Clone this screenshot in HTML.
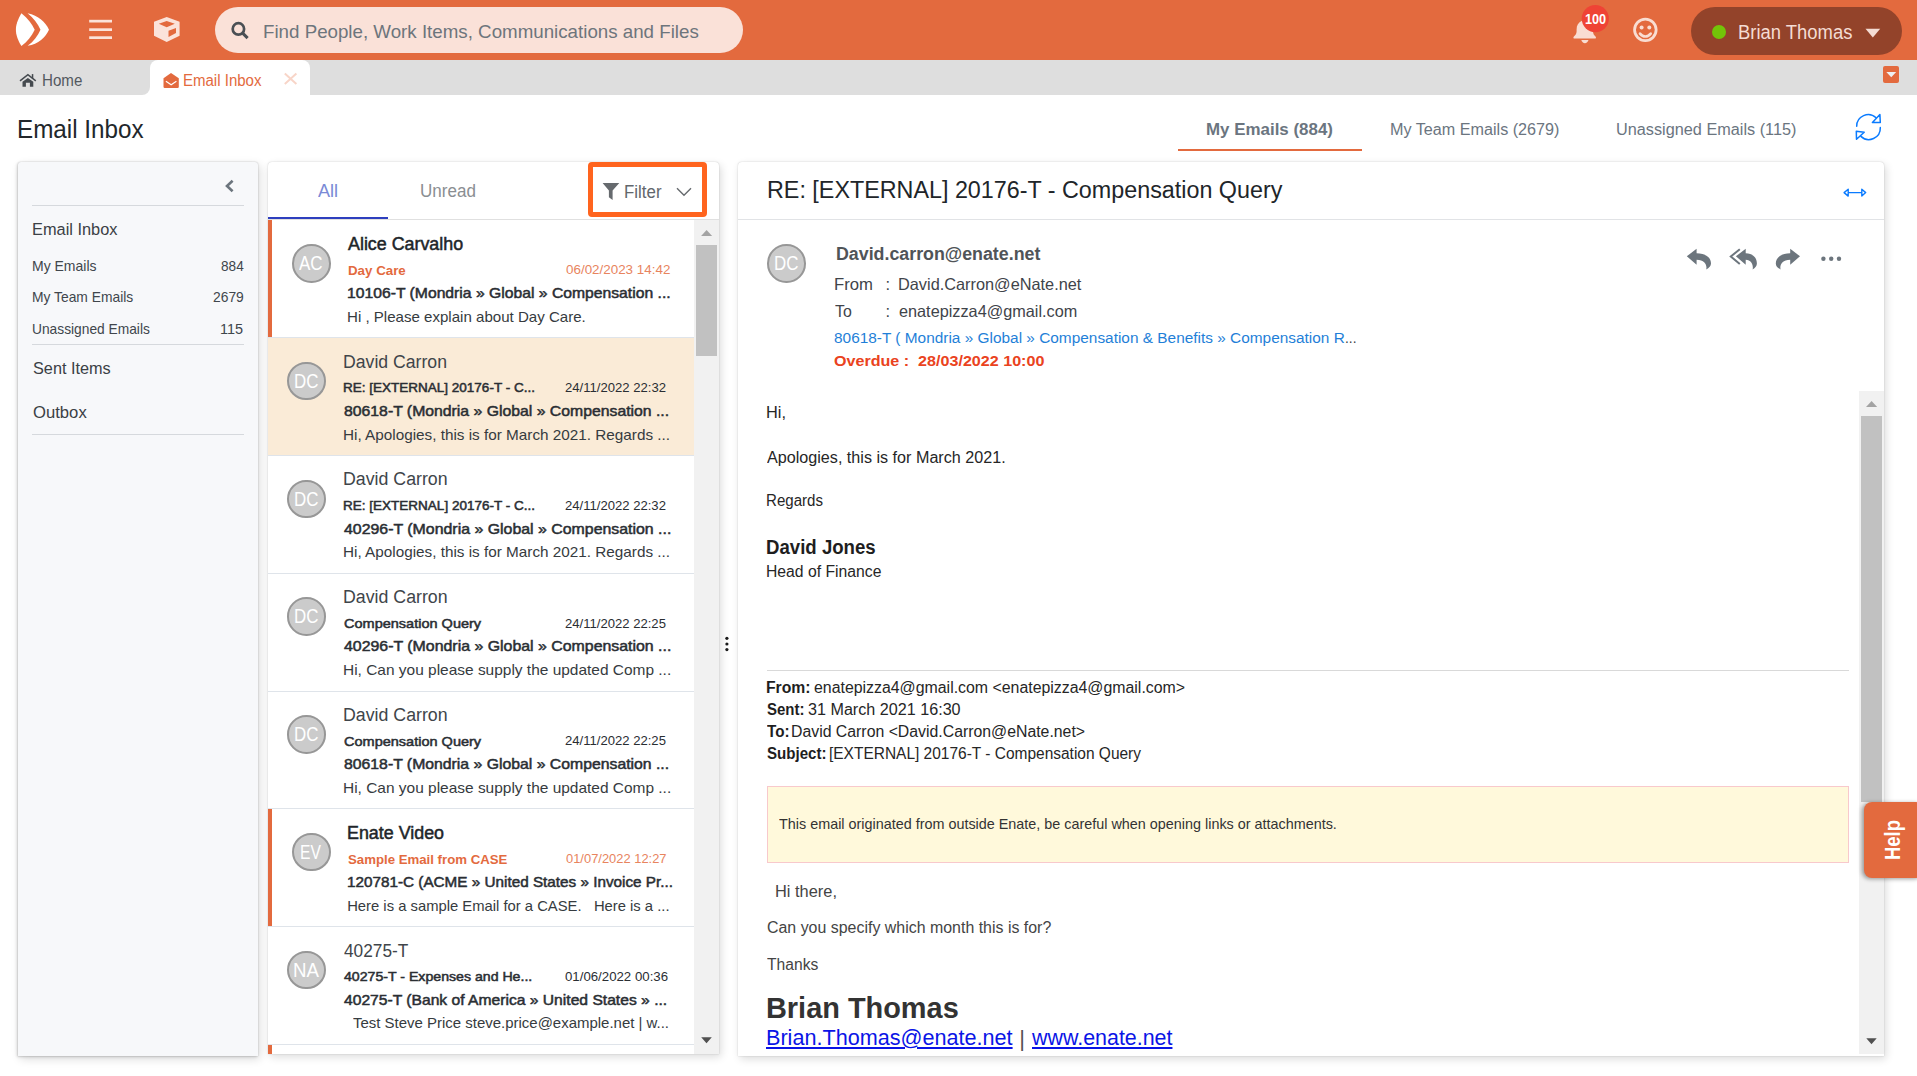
<!DOCTYPE html>
<html><head><meta charset="utf-8"><title>Email Inbox</title>
<style>
html,body{margin:0;padding:0;width:1917px;height:1076px;overflow:hidden;background:#fff;font-family:"Liberation Sans",sans-serif;}
.b{position:absolute;box-sizing:border-box;}
.t{position:absolute;white-space:pre;line-height:normal;transform-origin:0 0;}
</style></head><body>
<div class=b style="left:0;top:0;width:1917px;height:60px;background:#E36A3E"></div>
<svg class=b style="left:0;top:0" width="260" height="60" viewBox="0 0 260 60">
<path fill="#fff" d="M21.4,13.3 C17.5,20 15.9,25 15.9,29.7 C15.9,34.5 17.5,39.5 21.4,46 C27.5,41.5 31.8,36 34.7,29.7 C31.8,23.5 27.5,18 21.4,13.3 Z"/>
<path fill="#fff" d="M27.6,13.3 C38.5,15.5 45.5,22 49,29.7 C45.5,37.5 38.5,44 27.6,45.8 C33.5,41.5 37.8,36 40.5,29.7 C37.8,23.5 33.5,18 27.6,13.3 Z"/>
<rect x="89.2" y="19.8" width="22.8" height="2.7" fill="#FBE3DA"/>
<rect x="89.2" y="28.3" width="22.8" height="2.7" fill="#FBE3DA"/>
<rect x="89.2" y="36.3" width="22.8" height="2.7" fill="#FBE3DA"/>
<path fill="#FBE3DA" fill-rule="evenodd" d="M166.7,17 L179.6,21.8 L179.6,35.8 L166.7,42 L154,35.8 L154,21.8 Z M158.8,23.8 L166.7,27.2 L174.8,23.8 L166.7,20.9 Z M168.5,30.7 L176,28.1 L176,33 L168.5,37 Z"/>
</svg>
<div class=b style="left:215px;top:7px;width:528px;height:46px;border-radius:23px;background:#FAE1D8"></div>
<svg class=b style="left:225px;top:18px" width="30" height="30" viewBox="225 18 30 30">
<circle cx="238.4" cy="28.9" r="5.7" fill="none" stroke="#4A4F54" stroke-width="2.7"/>
<line x1="242.6" y1="33.1" x2="247.6" y2="38.1" stroke="#4A4F54" stroke-width="3"/>
</svg>
<div class=t style="left:262.59px;top:21.00px;font:400 18.5px 'Liberation Sans',sans-serif;color:#6D757C;transform:scaleX(1.0123);">Find People, Work Items, Communications and Files</div>
<svg class=b style="left:1565px;top:0" width="120" height="60" viewBox="1565 0 120 60">
<path fill="#F9DDD2" d="M1582,20.8 C1578.3,22.3 1576.6,25.5 1576.6,29.5 L1576.6,31.5 C1576.6,33.8 1575.2,35.4 1573.9,36.4 C1573,37.2 1573.4,38.6 1574.6,38.6 L1594.8,38.6 C1596,38.6 1596.4,37.2 1595.5,36.4 C1594.2,35.4 1593,33.8 1593,31.5 L1593,29.5 C1593,25.5 1591.3,22.3 1587.6,20.8 Z M1581.3,40 L1588.5,40 C1588,42 1586.5,43.2 1584.9,43.2 C1583.3,43.2 1581.8,42 1581.3,40 Z"/>
<circle cx="1595.3" cy="18.6" r="13.6" fill="#EF4335"/>
<circle cx="1645.35" cy="29.85" r="10.8" fill="none" stroke="#F9DDD2" stroke-width="2.8"/>
<circle cx="1641.6" cy="27.4" r="2" fill="#F9DDD2"/>
<circle cx="1649.3" cy="27.4" r="2" fill="#F9DDD2"/>
<path d="M1640,33.6 C1643,37.4 1647.7,37.4 1650.7,33.6" fill="none" stroke="#F9DDD2" stroke-width="2.6" stroke-linecap="round"/>
</svg>
<div class=t style="left:1585.00px;top:11.00px;font:700 14.5px 'Liberation Sans',sans-serif;color:#fff;transform:scaleX(0.8745);">100</div>
<div class=b style="left:1691px;top:7px;width:211px;height:48px;border-radius:24px;background:#93432A"></div>
<div class=b style="left:1712px;top:25px;width:14.4px;height:14.4px;border-radius:50%;background:#73C408"></div>
<div class=t style="left:1738.05px;top:21.00px;font:400 19.5px 'Liberation Sans',sans-serif;color:#F4DCD3;transform:scaleX(0.9450);">Brian Thomas</div>
<svg class=b style="left:1860px;top:20px" width="30" height="24" viewBox="1860 20 30 24">
<path d="M1865.5,28.7 L1880.2,28.7 L1872.85,37.4 Z" fill="#F4DCD3"/></svg>
<div class=b style="left:0;top:60px;width:1917px;height:35px;background:#DEDEDE"></div>
<div class=b style="left:138px;top:83px;width:14px;height:12px;background:#fff"></div>
<div class=b style="left:0;top:60px;width:150px;height:35px;border-radius:0 0 8px 0;background:#DEDEDE"></div>
<div class=b style="left:150px;top:60px;width:160px;height:35px;border-radius:8px 8px 0 0;background:#fff"></div>
<svg class=b style="left:0;top:60px" width="320" height="35" viewBox="0 60 320 35">
<path fill="none" stroke="#454A4F" stroke-width="1.5" d="M20,80.8 L27.9,74.6 L35.8,80.8"/><rect x="31.8" y="74.1" width="1.5" height="4.2" fill="#454A4F"/><path fill="#454A4F" d="M27.9,77.9 L22.5,81.7 L22.5,86.7 L25.9,86.7 L25.9,82.7 L29.9,82.7 L29.9,86.7 L33.3,86.7 L33.3,81.7 Z"/>
<path fill="#E36A3E" d="M171,73 L163.5,78.3 L163.5,86.8 Q163.5,88 164.7,88 L177.6,88 Q178.8,88 178.8,86.8 L178.8,78.3 Z"/>
<path fill="none" stroke="#fff" stroke-width="1.2" d="M165.9,81.2 L171.15,84.7 L176.4,81.2"/>
<path stroke="#F8D5C8" stroke-width="2" d="M284.8,73.6 L296.4,84 M296.4,73.6 L284.8,84"/>
</svg>
<div class=t style="left:41.85px;top:72.00px;font:400 16px 'Liberation Sans',sans-serif;color:#53595F;transform:scaleX(0.9454);">Home</div>
<div class=t style="left:183.36px;top:72.00px;font:400 16px 'Liberation Sans',sans-serif;color:#E36A3E;transform:scaleX(0.9383);">Email Inbox</div>
<div class=b style="left:1882.7px;top:66.3px;width:16.8px;height:16.7px;border-radius:2px;background:#E36A3E"></div>
<svg class=b style="left:1882.7px;top:66.3px" width="17" height="17" viewBox="0 0 17 17"><path d="M3.3,5.9 L13.2,5.9 L8.25,11.2 Z" fill="#EEF0F2"/></svg>
<div class=t style="left:17.16px;top:115.00px;font:400 25px 'Liberation Sans',sans-serif;color:#22272B;transform:scaleX(0.9697);">Email Inbox</div>
<div class=t style="left:1206.22px;top:119.00px;font:700 17.3px 'Liberation Sans',sans-serif;color:#6B757F;transform:scaleX(0.9788);">My Emails (884)</div>
<div class=t style="left:1390.36px;top:119.00px;font:400 17.3px 'Liberation Sans',sans-serif;color:#6B757F;transform:scaleX(0.9352);">My Team Emails (2679)</div>
<div class=t style="left:1616.26px;top:119.00px;font:400 17.3px 'Liberation Sans',sans-serif;color:#6B757F;transform:scaleX(0.9409);">Unassigned Emails (115)</div>
<div class=b style="left:1178px;top:149.3px;width:184px;height:1.5px;background:#E36A3E"></div>
<svg class=b style="left:1850px;top:108px" width="40" height="36" viewBox="1850 108 40 36">
<g fill="none" stroke="#0A7BFF" stroke-width="1.5" stroke-linejoin="round" stroke-linecap="round">
<path d="M1856.7,126.3 A11.5,11.5 0 0 1 1876.1,117.8"/>
<path d="M1880.3,127.6 A11.5,11.5 0 0 1 1860.9,136.4"/>
<path d="M1879.9,114.6 L1880.3,122.6 L1872.4,122.6 Z"/>
<path d="M1856.5,139.3 L1856.3,131.3 L1864.2,132.2 Z"/>
</g></svg>
<div class=b style="left:18px;top:162px;width:240px;height:894px;background:#F7F8FA;border-radius:3px 3px 0 0;box-shadow:0 0 1.5px rgba(0,0,0,0.26), -1px 1px 3px rgba(0,0,0,0.14), 2px 3px 10px rgba(0,0,0,0.14)"></div>
<div class=b style="left:268px;top:162px;width:451px;height:892px;background:#fff;border-radius:4px 4px 0 0;box-shadow:0 0 1.5px rgba(0,0,0,0.24), 2px 3px 9px rgba(0,0,0,0.14)"></div>
<div class=b style="left:738px;top:162px;width:1146px;height:893.5px;background:#fff;border-radius:4px 4px 0 0;box-shadow:0 0 1.5px rgba(0,0,0,0.24), 2px 3px 9px rgba(0,0,0,0.14)"></div>
<svg class=b style="left:220px;top:175px" width="20" height="22" viewBox="220 175 20 22">
<path fill="none" stroke="#6C757D" stroke-width="2.6" d="M232.6,180.8 L227,186 L232.6,191.3"/></svg>
<div class=b style="left:32px;top:205px;width:212px;height:1px;background:#D6D9DD"></div>
<div class=t style="left:32.36px;top:219.00px;font:400 17.4px 'Liberation Sans',sans-serif;color:#3B4045;transform:scaleX(0.9405);">Email Inbox</div>
<div class=t style="left:31.97px;top:257.00px;font:400 15px 'Liberation Sans',sans-serif;color:#40464C;transform:scaleX(0.9325);">My Emails</div>
<div class=t style="left:220.60px;top:257.00px;font:400 15px 'Liberation Sans',sans-serif;color:#40464C;transform:scaleX(0.9074);">884</div>
<div class=t style="left:31.98px;top:288.00px;font:400 15px 'Liberation Sans',sans-serif;color:#40464C;transform:scaleX(0.9224);">My Team Emails</div>
<div class=t style="left:212.50px;top:288.00px;font:400 15px 'Liberation Sans',sans-serif;color:#40464C;transform:scaleX(0.9235);">2679</div>
<div class=t style="left:31.98px;top:320.00px;font:400 15px 'Liberation Sans',sans-serif;color:#40464C;transform:scaleX(0.9181);">Unassigned Emails</div>
<div class=t style="left:220.34px;top:320.00px;font:400 15px 'Liberation Sans',sans-serif;color:#40464C;transform:scaleX(0.9614);">115</div>
<div class=b style="left:32px;top:344px;width:212px;height:1px;background:#D6D9DD"></div>
<div class=t style="left:32.90px;top:359.00px;font:400 17px 'Liberation Sans',sans-serif;color:#3B4045;transform:scaleX(0.9560);">Sent Items</div>
<div class=t style="left:32.90px;top:403.00px;font:400 17px 'Liberation Sans',sans-serif;color:#3B4045;transform:scaleX(0.9799);">Outbox</div>
<div class=b style="left:32px;top:434px;width:212px;height:1px;background:#D6D9DD"></div>
<div class=t style="left:317.80px;top:181.00px;font:400 17.5px 'Liberation Sans',sans-serif;color:#7A8AD6;transform:scaleX(1.0345);">All</div>
<div class=t style="left:419.53px;top:181.00px;font:400 17.5px 'Liberation Sans',sans-serif;color:#8A8E92;transform:scaleX(0.9737);">Unread</div>
<div class=b style="left:268px;top:219px;width:451px;height:1px;background:#E0E0E0"></div>
<div class=b style="left:268px;top:217px;width:120px;height:2px;background:#2E3FBE"></div>
<div class=b style="left:588px;top:162px;width:119px;height:55px;border:5px solid #FF641E;border-radius:4px"></div>
<svg class=b style="left:595px;top:178px" width="104" height="28" viewBox="595 178 104 28">
<path fill="#666A6E" d="M602.6,182.9 L619.3,182.9 L612.6,190.5 L612.6,200 L608.9,197.3 L608.9,190.5 Z"/>
<path fill="none" stroke="#666A6E" stroke-width="1.4" d="M677,188.2 L684,195.2 L691,188.2"/>
</svg>
<div class=t style="left:624.34px;top:182.00px;font:400 17.5px 'Liberation Sans',sans-serif;color:#62676C;transform:scaleX(0.9643);">Filter</div>
<div class=b style="left:694px;top:220px;width:25px;height:834px;background:#F1F1F1"></div>
<div class=b style="left:696px;top:245px;width:21px;height:111px;background:#C1C1C1"></div>
<svg class=b style="left:694px;top:220px" width="25" height="834" viewBox="694 220 25 834">
<path d="M701.1,235.9 L712.1,235.9 L706.6,230 Z" fill="#A3A3A3"/>
<path d="M701.2,1037.2 L711.8,1037.2 L706.5,1043.3 Z" fill="#505050"/>
</svg>
<div class=b style="left:268px;top:220px;width:426px;height:117px;background:#fff"></div>
<div class=b style="left:268px;top:337px;width:426px;height:1px;background:#DFE4EA"></div>
<div class=b style="left:268px;top:220px;width:4px;height:117px;background:#E36A3E"></div>
<div class=b style="left:292px;top:244.0px;width:38.5px;height:38.5px;border-radius:50%;background:#CBCBCB;border:2.8px solid #979797"></div>
<div class=t style="left:299.10px;top:252.00px;font:400 20.4px 'Liberation Sans',sans-serif;color:#fff;transform:scaleX(0.8333);">AC</div>
<div class=t style="left:348.20px;top:234.00px;-webkit-text-stroke:0.5px #212529;font:400 18px 'Liberation Sans',sans-serif;color:#212529;transform:scaleX(0.9919);">Alice Carvalho</div>
<div class=t style="left:348.20px;top:263.00px;font:700 13px 'Liberation Sans',sans-serif;color:#E36A3E;transform:scaleX(1.0243);">Day Care</div>
<div class=t style="left:566.20px;top:262.00px;font:400 13px 'Liberation Sans',sans-serif;color:#E8845E;transform:scaleX(1.0309);">06/02/2023 14:42</div>
<div class=t style="left:347.12px;top:285.00px;-webkit-text-stroke:0.5px #2A2E33;font:400 14.5px 'Liberation Sans',sans-serif;color:#2A2E33;transform:scaleX(1.0832);">10106-T (Mondria » Global » Compensation ...</div>
<div class=t style="left:347.18px;top:309.00px;font:400 14.8px 'Liberation Sans',sans-serif;color:#363B40;transform:scaleX(1.0185);">Hi , Please explain about Day Care.</div>
<div class=b style="left:268px;top:338px;width:426px;height:117px;background:#FAEBD7"></div>
<div class=b style="left:268px;top:455px;width:426px;height:1px;background:#DFE4EA"></div>
<div class=b style="left:287px;top:361.77px;width:38.5px;height:38.5px;border-radius:50%;background:#CBCBCB;border:2.8px solid #979797"></div>
<div class=t style="left:294.17px;top:370.00px;font:400 20.4px 'Liberation Sans',sans-serif;color:#fff;transform:scaleX(0.8296);">DC</div>
<div class=t style="left:343.32px;top:352.00px;font:400 18px 'Liberation Sans',sans-serif;color:#40454A;transform:scaleX(0.9805);">David Carron</div>
<div class=t style="left:343.24px;top:380.00px;-webkit-text-stroke:0.5px #2A2E33;font:400 12.8px 'Liberation Sans',sans-serif;color:#2A2E33;transform:scaleX(1.0554);">RE: [EXTERNAL] 20176-T - C...</div>
<div class=t style="left:565.40px;top:380.00px;font:400 12.8px 'Liberation Sans',sans-serif;color:#2A2E33;transform:scaleX(1.0238);">24/11/2022 22:32</div>
<div class=t style="left:344.30px;top:403.00px;-webkit-text-stroke:0.5px #2A2E33;font:400 14.5px 'Liberation Sans',sans-serif;color:#2A2E33;transform:scaleX(1.0883);">80618-T (Mondria » Global » Compensation ...</div>
<div class=t style="left:343.27px;top:427.00px;font:400 14.8px 'Liberation Sans',sans-serif;color:#363B40;transform:scaleX(1.0328);">Hi, Apologies, this is for March 2021. Regards ...</div>
<div class=b style="left:268px;top:456px;width:426px;height:117px;background:#fff"></div>
<div class=b style="left:268px;top:573px;width:426px;height:1px;background:#DFE4EA"></div>
<div class=b style="left:287px;top:479.53999999999996px;width:38.5px;height:38.5px;border-radius:50%;background:#CBCBCB;border:2.8px solid #979797"></div>
<div class=t style="left:294.17px;top:488.00px;font:400 20.4px 'Liberation Sans',sans-serif;color:#fff;transform:scaleX(0.8296);">DC</div>
<div class=t style="left:343.31px;top:469.00px;font:400 18px 'Liberation Sans',sans-serif;color:#40454A;transform:scaleX(0.9863);">David Carron</div>
<div class=t style="left:343.24px;top:498.00px;-webkit-text-stroke:0.5px #2A2E33;font:400 12.8px 'Liberation Sans',sans-serif;color:#2A2E33;transform:scaleX(1.0560);">RE: [EXTERNAL] 20176-T - C...</div>
<div class=t style="left:565.40px;top:498.00px;font:400 12.8px 'Liberation Sans',sans-serif;color:#2A2E33;transform:scaleX(1.0227);">24/11/2022 22:32</div>
<div class=t style="left:344.30px;top:521.00px;-webkit-text-stroke:0.5px #2A2E33;font:400 14.5px 'Liberation Sans',sans-serif;color:#2A2E33;transform:scaleX(1.0957);">40296-T (Mondria » Global » Compensation ...</div>
<div class=t style="left:343.27px;top:544.00px;font:400 14.8px 'Liberation Sans',sans-serif;color:#363B40;transform:scaleX(1.0328);">Hi, Apologies, this is for March 2021. Regards ...</div>
<div class=b style="left:268px;top:574px;width:426px;height:117px;background:#fff"></div>
<div class=b style="left:268px;top:691px;width:426px;height:1px;background:#DFE4EA"></div>
<div class=b style="left:287px;top:597.31px;width:38.5px;height:38.5px;border-radius:50%;background:#CBCBCB;border:2.8px solid #979797"></div>
<div class=t style="left:294.17px;top:605.00px;font:400 20.4px 'Liberation Sans',sans-serif;color:#fff;transform:scaleX(0.8296);">DC</div>
<div class=t style="left:343.31px;top:587.00px;font:400 18px 'Liberation Sans',sans-serif;color:#40454A;transform:scaleX(0.9863);">David Carron</div>
<div class=t style="left:344.30px;top:616.00px;-webkit-text-stroke:0.5px #2A2E33;font:400 12.8px 'Liberation Sans',sans-serif;color:#2A2E33;transform:scaleX(1.1339);">Compensation Query</div>
<div class=t style="left:565.40px;top:616.00px;font:400 12.8px 'Liberation Sans',sans-serif;color:#2A2E33;transform:scaleX(1.0227);">24/11/2022 22:25</div>
<div class=t style="left:344.30px;top:638.00px;-webkit-text-stroke:0.5px #2A2E33;font:400 14.5px 'Liberation Sans',sans-serif;color:#2A2E33;transform:scaleX(1.0957);">40296-T (Mondria » Global » Compensation ...</div>
<div class=t style="left:343.26px;top:662.00px;font:400 14.8px 'Liberation Sans',sans-serif;color:#363B40;transform:scaleX(1.0445);">Hi, Can you please supply the updated Comp ...</div>
<div class=b style="left:268px;top:692px;width:426px;height:116px;background:#fff"></div>
<div class=b style="left:268px;top:808px;width:426px;height:1px;background:#DFE4EA"></div>
<div class=b style="left:287px;top:715.0799999999999px;width:38.5px;height:38.5px;border-radius:50%;background:#CBCBCB;border:2.8px solid #979797"></div>
<div class=t style="left:294.17px;top:723.00px;font:400 20.4px 'Liberation Sans',sans-serif;color:#fff;transform:scaleX(0.8296);">DC</div>
<div class=t style="left:343.31px;top:705.00px;font:400 18px 'Liberation Sans',sans-serif;color:#40454A;transform:scaleX(0.9863);">David Carron</div>
<div class=t style="left:344.30px;top:734.00px;-webkit-text-stroke:0.5px #2A2E33;font:400 12.8px 'Liberation Sans',sans-serif;color:#2A2E33;transform:scaleX(1.1339);">Compensation Query</div>
<div class=t style="left:565.40px;top:733.00px;font:400 12.8px 'Liberation Sans',sans-serif;color:#2A2E33;transform:scaleX(1.0227);">24/11/2022 22:25</div>
<div class=t style="left:344.30px;top:756.00px;-webkit-text-stroke:0.5px #2A2E33;font:400 14.5px 'Liberation Sans',sans-serif;color:#2A2E33;transform:scaleX(1.0883);">80618-T (Mondria » Global » Compensation ...</div>
<div class=t style="left:343.26px;top:780.00px;font:400 14.8px 'Liberation Sans',sans-serif;color:#363B40;transform:scaleX(1.0445);">Hi, Can you please supply the updated Comp ...</div>
<div class=b style="left:268px;top:809px;width:426px;height:117px;background:#fff"></div>
<div class=b style="left:268px;top:926px;width:426px;height:1px;background:#DFE4EA"></div>
<div class=b style="left:268px;top:809px;width:4px;height:117px;background:#E36A3E"></div>
<div class=b style="left:292px;top:832.85px;width:38.5px;height:38.5px;border-radius:50%;background:#CBCBCB;border:2.8px solid #979797"></div>
<div class=t style="left:300.43px;top:841.00px;font:400 20.4px 'Liberation Sans',sans-serif;color:#fff;transform:scaleX(0.7669);">EV</div>
<div class=t style="left:347.21px;top:823.00px;-webkit-text-stroke:0.5px #212529;font:400 18px 'Liberation Sans',sans-serif;color:#212529;transform:scaleX(0.9923);">Enate Video</div>
<div class=t style="left:348.20px;top:852.00px;font:700 13px 'Liberation Sans',sans-serif;color:#E36A3E;transform:scaleX(1.0166);">Sample Email from CASE</div>
<div class=t style="left:566.40px;top:851.00px;font:400 13px 'Liberation Sans',sans-serif;color:#E8845E;transform:scaleX(0.9933);">01/07/2022 12:27</div>
<div class=t style="left:347.15px;top:874.00px;-webkit-text-stroke:0.5px #2A2E33;font:400 14.5px 'Liberation Sans',sans-serif;color:#2A2E33;transform:scaleX(1.0532);">120781-C (ACME » United States » Invoice Pr...</div>
<div class=t style="left:347.20px;top:898.00px;font:400 14.8px 'Liberation Sans',sans-serif;color:#363B40;">Here is a sample Email for a CASE.   Here is a ...</div>
<div class=b style="left:268px;top:927px;width:426px;height:117px;background:#fff"></div>
<div class=b style="left:268px;top:1044px;width:426px;height:1px;background:#DFE4EA"></div>
<div class=b style="left:287px;top:950.62px;width:38.5px;height:38.5px;border-radius:50%;background:#CBCBCB;border:2.8px solid #979797"></div>
<div class=t style="left:292.68px;top:959.00px;font:400 20.4px 'Liberation Sans',sans-serif;color:#fff;transform:scaleX(0.9161);">NA</div>
<div class=t style="left:344.30px;top:941.00px;font:400 18px 'Liberation Sans',sans-serif;color:#40454A;transform:scaleX(0.9590);">40275-T</div>
<div class=t style="left:344.30px;top:969.00px;-webkit-text-stroke:0.5px #2A2E33;font:400 12.8px 'Liberation Sans',sans-serif;color:#2A2E33;transform:scaleX(1.1042);">40275-T - Expenses and He...</div>
<div class=t style="left:565.10px;top:969.00px;font:400 12.8px 'Liberation Sans',sans-serif;color:#2A2E33;transform:scaleX(1.0341);">01/06/2022 00:36</div>
<div class=t style="left:344.30px;top:992.00px;-webkit-text-stroke:0.5px #2A2E33;font:400 14.5px 'Liberation Sans',sans-serif;color:#2A2E33;transform:scaleX(1.0788);">40275-T (Bank of America » United States » ...</div>
<div class=t style="left:352.80px;top:1015.00px;font:400 14.8px 'Liberation Sans',sans-serif;color:#363B40;transform:scaleX(1.0114);">Test Steve Price steve.price@example.net | w...</div>
<div class=b style="left:268px;top:1044px;width:426px;height:10px;background:#fff;border-top:1px solid #DFE4EA"></div>
<div class=b style="left:268px;top:1045px;width:4px;height:9px;background:#E36A3E"></div>
<svg class=b style="left:720px;top:630px" width="14" height="26" viewBox="720 630 14 26"><g fill="#1A1A1A"><circle cx="726.9" cy="638.3" r="1.6"/><circle cx="726.9" cy="644" r="1.6"/><circle cx="726.9" cy="649.6" r="1.6"/></g></svg>
<div class=t style="left:767.31px;top:177.00px;font:400 23.5px 'Liberation Sans',sans-serif;color:#212529;transform:scaleX(0.9922);">RE: [EXTERNAL] 20176-T - Compensation Query</div>
<div class=b style="left:738px;top:219px;width:1146px;height:1px;background:#E1E3E6"></div>
<svg class=b style="left:1835px;top:180px" width="40" height="26" viewBox="1835 180 40 26">
<g fill="none" stroke="#0A7BFF" stroke-width="1.4" stroke-linejoin="round">
<path d="M1844.1,192.6 L1848.2,189.3 L1848.2,196.1 Z M1865.7,192.6 L1861.8,189.3 L1861.8,196.1 Z M1848.2,192.6 L1861.8,192.6"/>
</g></svg>
<div class=b style="left:767px;top:244px;width:38.5px;height:38.5px;border-radius:50%;background:#CBCBCB;border:2.8px solid #979797"></div>
<div class=t style="left:774.17px;top:252.00px;font:400 20.4px 'Liberation Sans',sans-serif;color:#fff;transform:scaleX(0.8296);">DC</div>
<div class=t style="left:835.88px;top:244.00px;font:700 17.5px 'Liberation Sans',sans-serif;color:#505458;transform:scaleX(1.0173);">David.carron@enate.net</div>
<div class=t style="left:833.89px;top:275.00px;font:400 16.5px 'Liberation Sans',sans-serif;color:#3F444A;transform:scaleX(1.0122);">From</div>
<div class=t style="left:885.60px;top:275.00px;font:400 16.5px 'Liberation Sans',sans-serif;color:#3F444A;">:</div>
<div class=t style="left:897.51px;top:275.00px;font:400 16.5px 'Liberation Sans',sans-serif;color:#3F444A;transform:scaleX(0.9885);">David.Carron@eNate.net</div>
<div class=t style="left:835.30px;top:302.00px;font:400 16.5px 'Liberation Sans',sans-serif;color:#3F444A;transform:scaleX(0.9623);">To</div>
<div class=t style="left:885.60px;top:302.00px;font:400 16.5px 'Liberation Sans',sans-serif;color:#3F444A;">:</div>
<div class=t style="left:898.50px;top:302.00px;font:400 16.5px 'Liberation Sans',sans-serif;color:#3F444A;transform:scaleX(0.9852);">enatepizza4@gmail.com</div>
<div class=t style="left:833.80px;top:329.00px;font:400 15.5px 'Liberation Sans',sans-serif;color:#1F7FD8;transform:scaleX(0.9936);">80618-T ( Mondria » Global » Compensation &amp; Benefits » Compensation R</div>
<div class=t style="left:1345.31px;top:329.00px;font:400 15.5px 'Liberation Sans',sans-serif;color:#3A3F44;transform:scaleX(0.8857);">...</div>
<div class=t style="left:834.00px;top:352.00px;font:700 15px 'Liberation Sans',sans-serif;color:#EA4220;transform:scaleX(1.0735);">Overdue :  28/03/2022 10:00</div>
<svg class=b style="left:1680px;top:240px" width="170" height="36" viewBox="1680 240 170 36">
<g fill="#6C757D">
<path d="M1686.8,256.3 L1696.6,248.7 L1696.6,253.3 C1705.5,253.3 1711,257.5 1711,263.5 C1711,266 1709.2,268 1706.2,269.4 C1707.3,265.8 1705,259.8 1696.6,259.8 L1696.6,264.7 Z"/>
<path d="M1735.9,256.3 L1745.7,248.7 L1745.7,253.3 C1752.5,253.3 1756.9,257.5 1756.9,263.5 C1756.9,266 1755.3,268 1752.6,269.4 C1753.6,265.8 1751.7,259.8 1745.7,259.8 L1745.7,264.7 Z"/>
<path d="M1800,256.3 L1790.2,248.7 L1790.2,253.3 C1781.3,253.3 1775.8,257.5 1775.8,263.5 C1775.8,266 1777.6,268 1780.6,269.4 C1779.5,265.8 1781.8,259.8 1790.2,259.8 L1790.2,264.7 Z"/>
<circle cx="1823.4" cy="258.8" r="2.2"/><circle cx="1831.2" cy="258.8" r="2.2"/><circle cx="1839" cy="258.8" r="2.2"/>
</g>
<path fill="none" stroke="#6C757D" stroke-width="2" d="M1739.8,249.2 L1730.8,256.5 L1739.8,264"/>
</svg>
<div class=b style="left:1859px;top:391px;width:25px;height:663px;background:#F1F1F1"></div>
<div class=b style="left:1861px;top:416px;width:21px;height:386px;background:#C1C1C1"></div>
<svg class=b style="left:1859px;top:391px" width="25" height="663" viewBox="1859 391 25 663">
<path d="M1866,407 L1877.2,407 L1871.6,400.9 Z" fill="#A3A3A3"/>
<path d="M1866.3,1038.3 L1876.7,1038.3 L1871.5,1044.2 Z" fill="#505050"/>
</svg>
<div class=t style="left:765.78px;top:404.00px;font:400 16px 'Liberation Sans',sans-serif;color:#262626;transform:scaleX(1.0216);">Hi,</div>
<div class=t style="left:766.80px;top:449.00px;font:400 16px 'Liberation Sans',sans-serif;color:#262626;transform:scaleX(1.0089);">Apologies, this is for March 2021.</div>
<div class=t style="left:765.86px;top:492.00px;font:400 16px 'Liberation Sans',sans-serif;color:#262626;transform:scaleX(0.9415);">Regards</div>
<div class=t style="left:765.85px;top:536.00px;font:700 19.5px 'Liberation Sans',sans-serif;color:#1E1E1E;transform:scaleX(0.9550);">David Jones</div>
<div class=t style="left:765.82px;top:563.00px;font:400 16px 'Liberation Sans',sans-serif;color:#262626;transform:scaleX(0.9828);">Head of Finance</div>
<div class=b style="left:766.8px;top:669.5px;width:1082px;height:1px;background:#D9D9D9"></div>
<div class=t style="left:765.82px;top:679.00px;font:700 16px 'Liberation Sans',sans-serif;color:#1E1E1E;transform:scaleX(0.9837);">From:</div>
<div class=t style="left:813.70px;top:679.00px;font:400 16px 'Liberation Sans',sans-serif;color:#262626;transform:scaleX(0.9921);">enatepizza4@gmail.com &lt;enatepizza4@gmail.com&gt;</div>
<div class=t style="left:766.80px;top:701.00px;font:700 16px 'Liberation Sans',sans-serif;color:#1E1E1E;transform:scaleX(0.9361);">Sent:</div>
<div class=t style="left:807.60px;top:701.00px;font:400 16px 'Liberation Sans',sans-serif;color:#262626;transform:scaleX(1.0091);">31 March 2021 16:30</div>
<div class=t style="left:766.80px;top:723.00px;font:700 16px 'Liberation Sans',sans-serif;color:#1E1E1E;transform:scaleX(0.9526);">To:</div>
<div class=t style="left:791.31px;top:723.00px;font:400 16px 'Liberation Sans',sans-serif;color:#262626;transform:scaleX(0.9891);">David Carron &lt;David.Carron@eNate.net&gt;</div>
<div class=t style="left:766.80px;top:745.00px;font:700 16px 'Liberation Sans',sans-serif;color:#1E1E1E;transform:scaleX(0.9419);">Subject:</div>
<div class=t style="left:828.63px;top:745.00px;font:400 16px 'Liberation Sans',sans-serif;color:#262626;transform:scaleX(0.9674);">[EXTERNAL] 20176-T - Compensation Query</div>
<div class=b style="left:766.5px;top:786px;width:1082.5px;height:76.5px;background:#FFF9DB;border:1px solid #F8C9CC"></div>
<div class=t style="left:778.60px;top:816.00px;font:400 14.3px 'Liberation Sans',sans-serif;color:#333;transform:scaleX(1.0057);">This email originated from outside Enate, be careful when opening links or attachments.</div>
<div class=t style="left:774.75px;top:883.00px;font:400 15.6px 'Liberation Sans',sans-serif;color:#444;transform:scaleX(1.0512);">Hi there,</div>
<div class=t style="left:766.90px;top:919.00px;font:400 15.6px 'Liberation Sans',sans-serif;color:#444;transform:scaleX(1.0218);">Can you specify which month this is for?</div>
<div class=t style="left:766.90px;top:956.00px;font:400 15.6px 'Liberation Sans',sans-serif;color:#444;transform:scaleX(1.0031);">Thanks</div>
<div class=t style="left:766.00px;top:992.00px;font:700 29px 'Liberation Sans',sans-serif;color:#333;transform:scaleX(0.9966);">Brian Thomas</div>
<div class=t style="left:766.02px;top:1025.00px;font:400 22px 'Liberation Sans',sans-serif;color:#0A14E6;transform:scaleX(0.9823);text-decoration:underline;">Brian.Thomas@enate.net</div>
<div class=t style="left:1019.30px;top:1026.00px;font:400 22px 'Liberation Sans',sans-serif;color:#555;">|</div>
<div class=t style="left:1031.67px;top:1025.00px;font:400 22px 'Liberation Sans',sans-serif;color:#0A14E6;transform:scaleX(0.9732);text-decoration:underline;">www.enate.net</div>
<div class=b style="left:1864px;top:802px;width:60px;height:75.5px;border-radius:8px;background:#E36A3E;box-shadow:-2px 1px 4px rgba(0,0,0,.38)"></div>
<div class=t style="left:1892.6px;top:839.7px;font:700 21.5px 'Liberation Sans',sans-serif;color:#fff;transform:translate(-50%,-50%) rotate(-90deg) scaleX(0.86);transform-origin:50% 50%">Help</div>
</body></html>
